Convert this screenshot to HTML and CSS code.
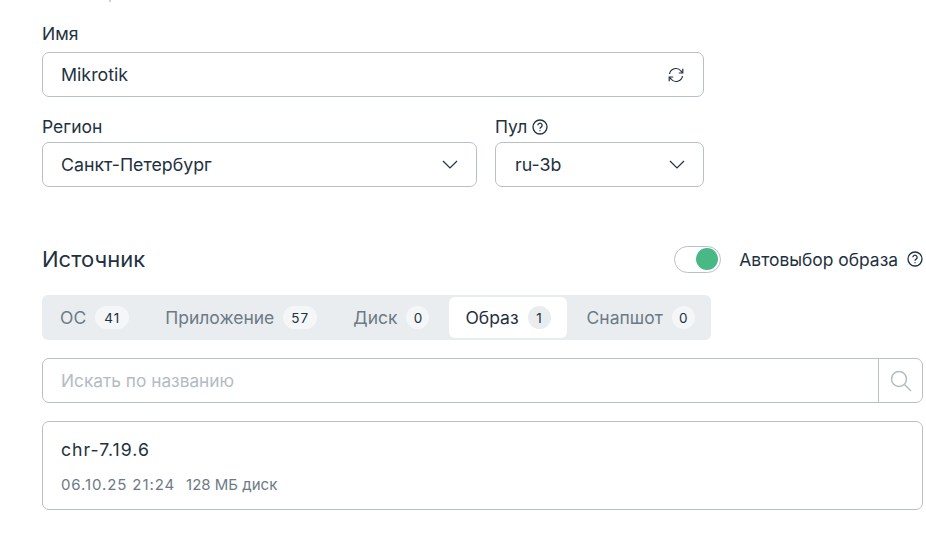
FILE: index.html
```html
<!DOCTYPE html>
<html lang="ru">
<head>
    <meta charset="UTF-8">
    <title>Mikrotik</title>
    <link rel="stylesheet" href="styles.css">
</head>
<body>
    <div class="page">
        <div class="top-tick"></div>
        <div class="field name-field">
            <label class="label">Имя</label>
            <div class="box">
                <span class="value">Mikrotik</span>
                <svg class="refresh" width="18" height="18" viewBox="0 0 18 18" fill="none" stroke="#1f3140" stroke-width="1.2">
                    <path d="M2.5 8A6.5 6.5 0 0 1 14 5l1.5 1.8"/>
                    <path d="M15.8 2.8v4.2h-4"/>
                    <path d="M15.5 10A6.5 6.5 0 0 1 4 13l-1.5-1.8"/>
                    <path d="M2.2 15.2V11h4"/>
                </svg>
            </div>
        </div>
        <div class="row">
            <div class="field region">
                <label class="label">Регион</label>
                <div class="box">
                    <span class="value">Санкт-Петербург</span>
                    <svg class="chev" width="16" height="9" viewBox="0 0 16 9" fill="none" stroke="#1f3140" stroke-width="1.2"><path d="M1 1l7 7 7-7"/></svg>
                </div>
            </div>
            <div class="field pool">
                <label class="label">Пул
                    <svg class="help" width="16" height="16" viewBox="0 0 16 16" fill="none" stroke="#1f3140" stroke-width="1.3">
                        <circle cx="8" cy="8" r="7"/>
                        <path d="M5.9 6.3a2.1 2.1 0 1 1 3.2 1.8c-.7.4-1.1.8-1.1 1.6"/>
                        <path d="M8 11.2v1"/>
                    </svg>
                </label>
                <div class="box">
                    <span class="value pool-value">ru-3b</span>
                    <svg class="chev" width="16" height="9" viewBox="0 0 16 9" fill="none" stroke="#1f3140" stroke-width="1.2"><path d="M1 1l7 7 7-7"/></svg>
                </div>
            </div>
        </div>

        <div class="source-head">
            <h2 class="title">Источник</h2>
            <div class="auto">
                <span class="toggle"><span class="knob"></span></span>
                <span class="auto-text">Автовыбор образа</span>
                <svg class="help" width="16" height="16" viewBox="0 0 16 16" fill="none" stroke="#1f3140" stroke-width="1.3">
                    <circle cx="8" cy="8" r="7"/>
                    <path d="M5.9 6.3a2.1 2.1 0 1 1 3.2 1.8c-.7.4-1.1.8-1.1 1.6"/>
                    <path d="M8 11.2v1"/>
                </svg>
            </div>
        </div>

        <div class="tabs">
            <div class="tab">ОС <span class="count wide">41</span></div>
            <div class="tab">Приложение <span class="count wide">57</span></div>
            <div class="tab">Диск <span class="count">0</span></div>
            <div class="tab active">Образ <span class="count">1</span></div>
            <div class="tab">Снапшот <span class="count">0</span></div>
        </div>

        <div class="search">
            <span class="placeholder">Искать по названию</span>
            <div class="search-btn">
                <svg width="24" height="24" viewBox="0 0 24 24" fill="none" stroke="#b3bbc3" stroke-width="1.5">
                    <circle cx="10" cy="10" r="7.5"/>
                    <path d="M15.5 15.5l6.5 6.5"/>
                </svg>
            </div>
        </div>

        <div class="card">
            <div class="card-name">chr-7.19.6</div>
            <div class="card-meta"><span class="card-time">06.10.25 21:24</span><span>128 МБ диск</span></div>
        </div>
    </div>
</body>
</html>
```

FILE: styles.css
```css
*{
    box-sizing: border-box;
}
body{
    margin: 0;
    background: #ffffff;
    color: #1f3140;
    font-family: "Inter", "Noto Sans", sans-serif;
    overflow: hidden;
}
.page{
    width: 926px;
    height: 541px;
    padding-left: 42px;
}
.top-tick{
    width: 2px;
    height: 2px;
    margin-left: 67px;
    background: #c6d3e4;
}
.field{
    display: flex;
    flex-direction: column;
}
.label{
    display: flex;
    align-items: center;
    gap: 5px;
    height: 20px;
    font-size: 17.5px;
    line-height: 20px;
    margin-bottom: 8px;
}
.name-field{
    width: 662px;
    margin-top: 22px;
}
.box{
    display: flex;
    align-items: center;
    justify-content: space-between;
    height: 45px;
    padding: 0 18px 0 18px;
    border: 1px solid #b8bfc7;
    border-radius: 7px;
}
.value{
    font-size: 17.8px;
}
.pool-value{
    margin-left: 1px;
}
.row{
    display: flex;
    gap: 18px;
    width: 662px;
    margin-top: 20px;
}
.region{
    width: 435px;
}
.pool{
    width: 209px;
}
.row .label{
    margin-bottom: 5px;
}
.source-head{
    display: flex;
    align-items: center;
    justify-content: space-between;
    width: 881px;
    height: 28px;
    margin-top: 58px;
}
.title{
    margin: 0;
    font-size: 22px;
    font-weight: 400;
}
.auto{
    display: flex;
    align-items: center;
}
.toggle{
    display: flex;
    align-items: center;
    justify-content: flex-end;
    width: 47px;
    height: 27px;
    padding-right: 2px;
    margin-right: 18px;
    border: 1px solid #b8bfc7;
    border-radius: 14px;
}
.knob{
    width: 22px;
    height: 22px;
    border-radius: 50%;
    background: #48b884;
}
.auto-text{
    font-size: 17.4px;
    margin-right: 9px;
}
.tabs{
    display: flex;
    align-items: center;
    gap: 4px;
    width: 669px;
    height: 45px;
    margin-top: 22px;
    padding: 0 2px;
    background: #e9edf0;
    border-radius: 6px;
}
.tab{
    display: flex;
    align-items: center;
    gap: 9px;
    height: 41px;
    padding: 0 16px;
    font-size: 17.5px;
    color: #6d7a85;
    border-radius: 6px;
}
.tab.active{
    background: #ffffff;
    color: #1f3140;
}
.count{
    display: flex;
    align-items: center;
    justify-content: center;
    width: 23px;
    height: 23px;
    border-radius: 12px;
    background: #f4f6f7;
    font-size: 13.5px;
    color: #1f3140;
}
.count.wide{
    width: 34px;
    letter-spacing: 1px;
}
.tab.active .count{
    background: #e9edf0;
}
.search{
    display: flex;
    align-items: center;
    justify-content: space-between;
    width: 881px;
    height: 45px;
    margin-top: 18px;
    padding-left: 18px;
    border: 1px solid #b8bfc7;
    border-radius: 7px;
}
.placeholder{
    font-size: 17.3px;
    color: #b3bbc3;
}
.search-btn{
    display: flex;
    align-items: center;
    justify-content: center;
    width: 44px;
    height: 100%;
    border-left: 1px solid #b8bfc7;
}
.card{
    width: 881px;
    height: 89px;
    margin-top: 18px;
    padding: 17px 18px 0;
    border: 1px solid #b8bfc7;
    border-radius: 7px;
}
.card-name{
    font-size: 17.7px;
    line-height: 22px;
    letter-spacing: 1px;
}
.card-meta{
    display: flex;
    gap: 11px;
    margin-top: 15px;
    font-size: 15px;
    line-height: 18px;
    color: #6d7a85;
}
.card-time{
    letter-spacing: .9px;
}
```
